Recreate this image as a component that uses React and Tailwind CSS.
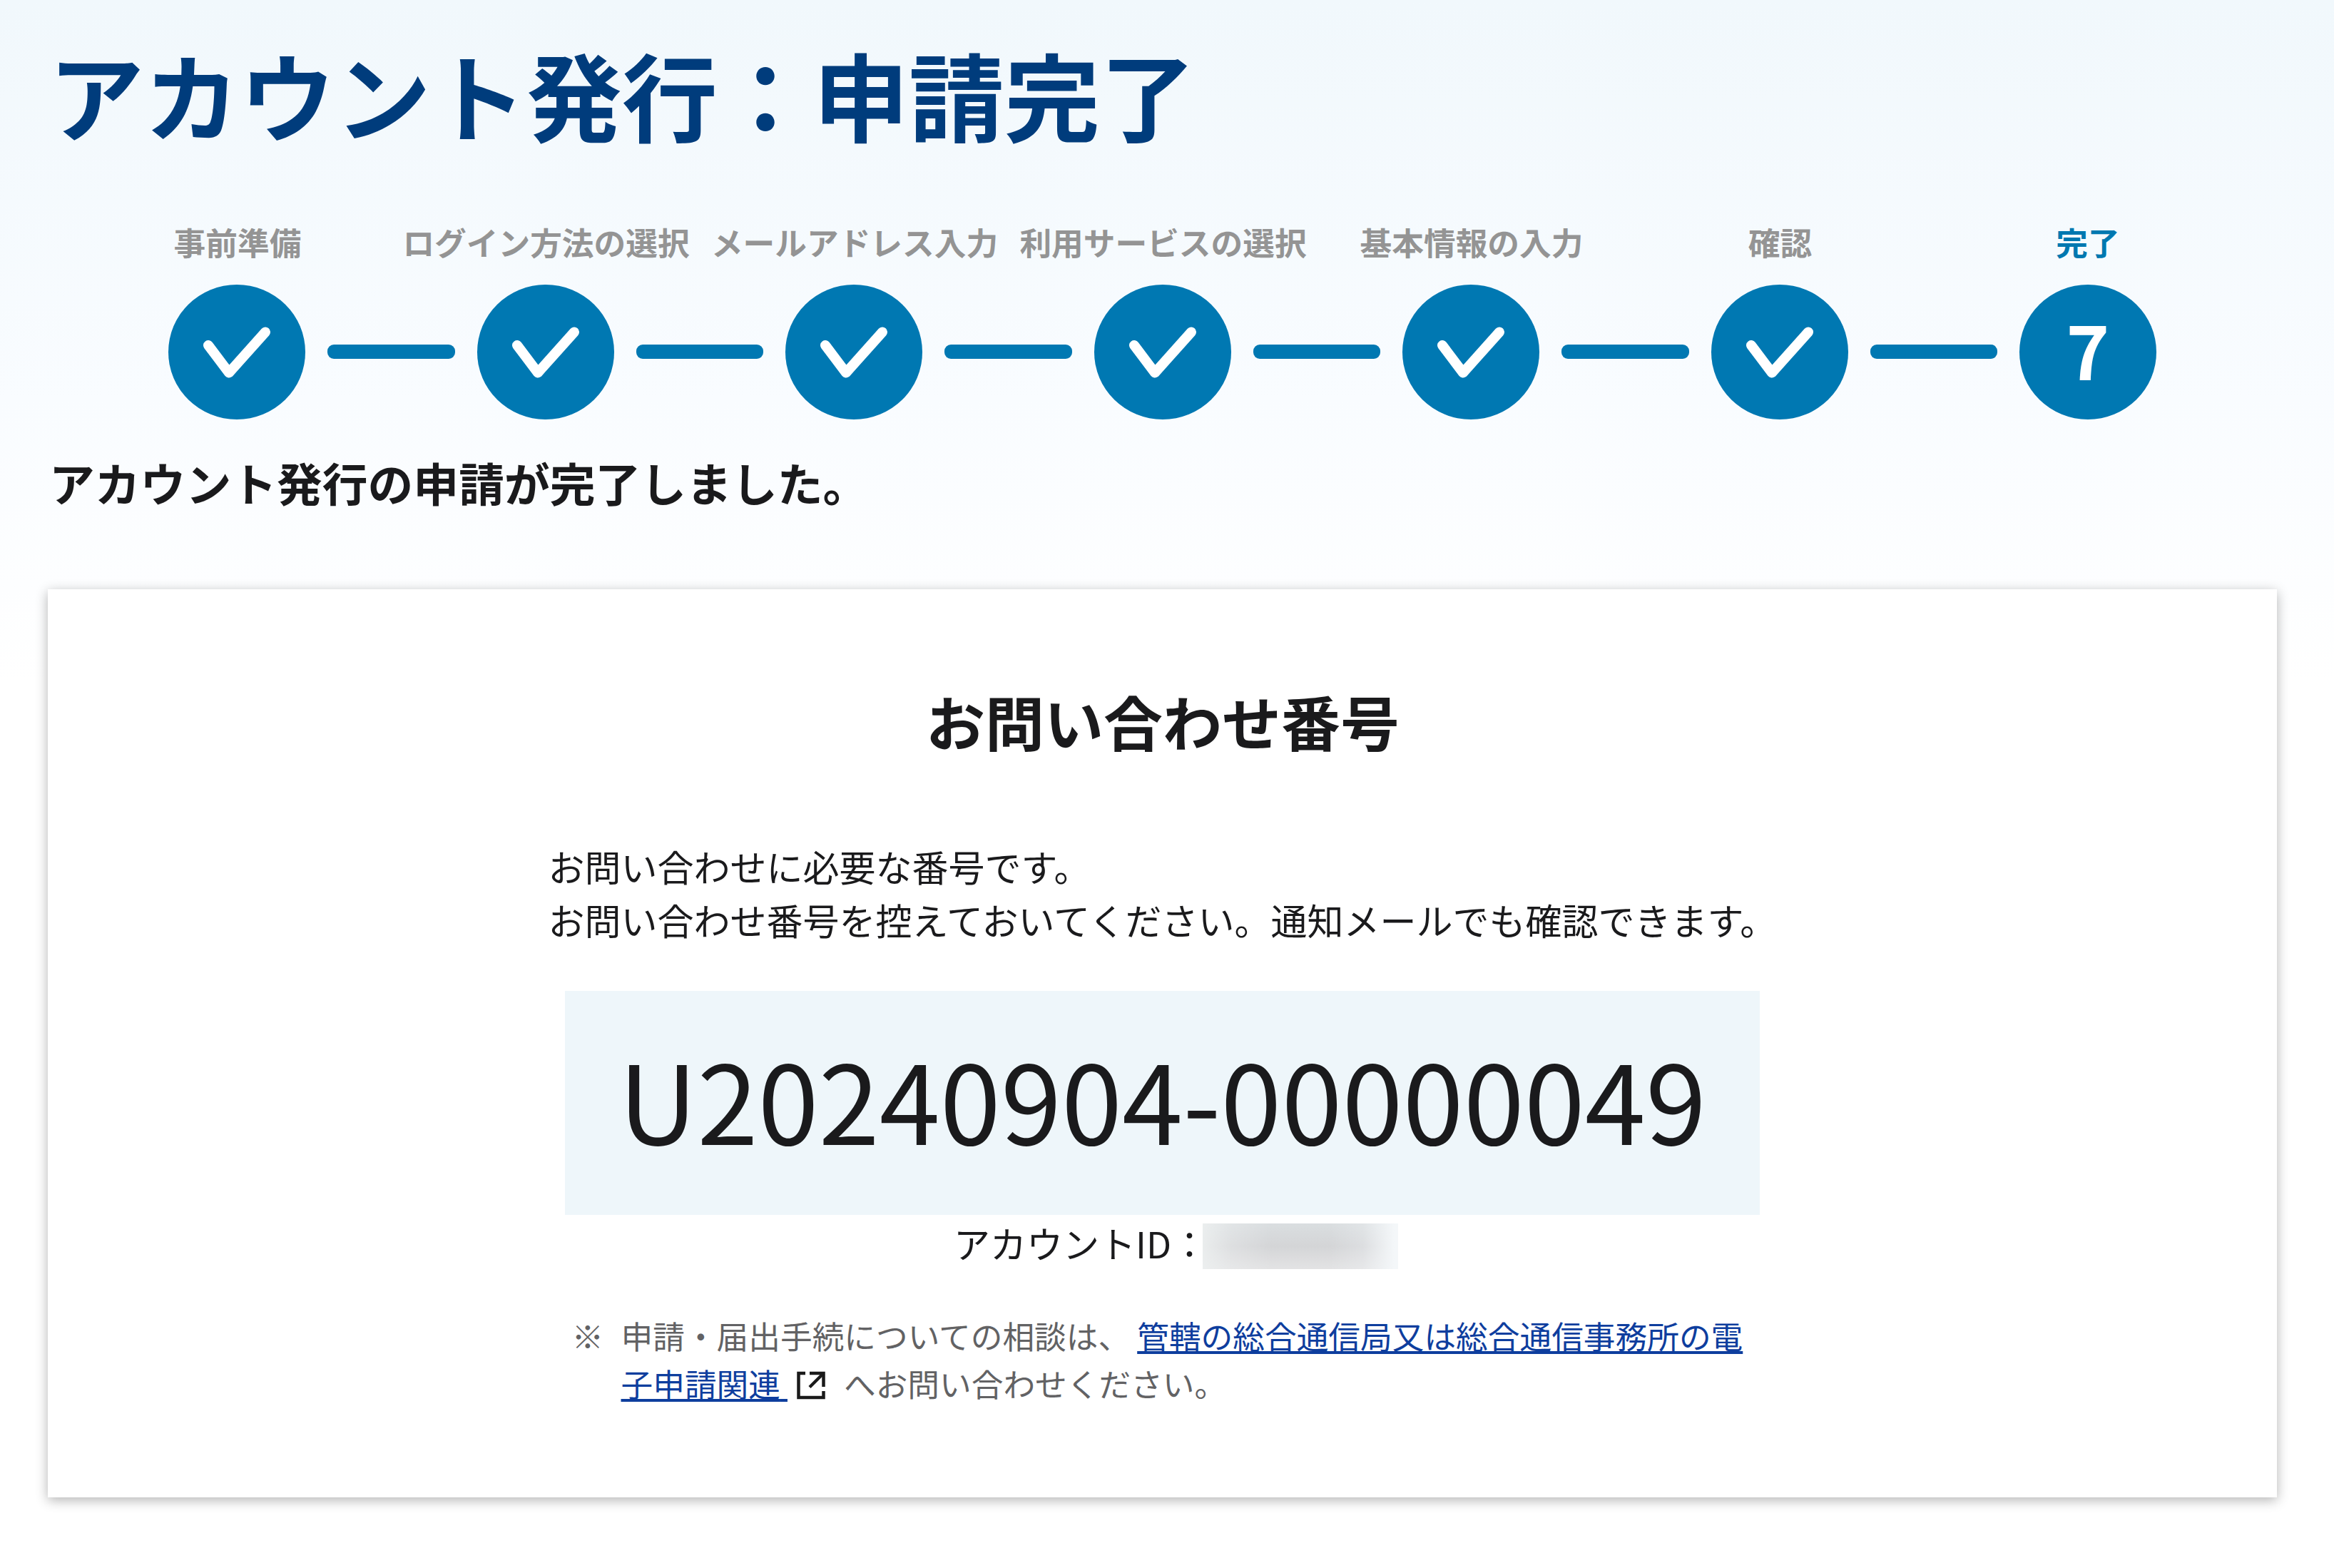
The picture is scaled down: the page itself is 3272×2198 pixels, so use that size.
const steps = [
  '事前準備',
  'ログイン方法の選択',
  'メールアドレス入力',
  '利用サービスの選択',
  '基本情報の入力',
  '確認',
  '完了',
]

function CheckMark() {
  return (
    <svg viewBox="0 0 192 189" className="w-full h-full" fill="none" stroke="#fff" strokeWidth="14" strokeLinecap="round" strokeLinejoin="round">
      <path d="M56 85 L85 123.5 L136 66.5" />
    </svg>
  )
}

function ExternalIcon() {
  return (
    <svg viewBox="0 0 40 40" className="inline-block w-10 h-10 ml-[13px] mr-[16px] align-[-4px]" fill="none" stroke="#1a1a1a" strokeWidth="4.5">
      <path d="M12 3 H2.5 V37 H37.5 V28" />
      <path d="M18 3 H37.5 V22" />
      <path d="M37 3.5 L18 22.5" />
    </svg>
  )
}

function Stepper() {
  return (
    <div className="flex items-end pl-[236px] pr-[249px]">
      {steps.map((label, i) => {
        const last = i === steps.length - 1
        return (
          <div key={label} className={last ? 'flex items-end' : 'flex items-end flex-1'}>
            <div className="w-48 shrink-0 flex flex-col items-center">
              <span className={`whitespace-nowrap text-[44.7px] leading-[60px] font-bold ${last ? 'text-[#0078b0]' : 'text-[#949494] pl-[2px]'}`}>
                {label}
              </span>
              <div className="mt-[30px] w-48 h-[189px] rounded-[50%] bg-[#0078b2] flex items-center justify-center">
                {last ? (
                  <span className="pb-[10px] text-white text-[103px] leading-[103px] font-bold">{i + 1}</span>
                ) : (
                  <CheckMark />
                )}
              </div>
            </div>
            {!last && <div className="flex-1 h-5 mx-[31px] mb-[85px] rounded-[9px] bg-[#0078b2]" />}
          </div>
        )
      })}
    </div>
  )
}

export default function App() {
  return (
    <div
      lang="ja"
      className="w-[3272px] h-[2198px] overflow-hidden bg-white bg-[linear-gradient(180deg,#f1f8fc_0px,#f9fcff_560px,#ffffff_960px)] font-['Noto_Sans_CJK_JP',sans-serif] text-[#1a1a1c]"
    >
      <h1 className="pt-[51px] pl-[68px] text-[134px] leading-[160px] font-bold text-[#003c7c]">
        アカウント発行：申請完了
      </h1>

      <div className="mt-[98px]">
        <Stepper />
      </div>

      <p className="mt-[47px] pl-[69px] text-[63.8px] leading-[80px] font-bold">
        アカウント発行の申請が完了しました。
      </p>

      <main className="mt-[111px] ml-[67px] w-[3125px] h-[1273px] bg-white shadow-[0_4px_16px_rgba(0,0,0,0.3)] flex flex-col items-center">
        <h2 className="mt-[134px] ml-px text-[83px] leading-[100px] font-bold">お問い合わせ番号</h2>

        <p className="mt-[117px] text-[51px] leading-[75px] whitespace-nowrap">
          お問い合わせに必要な番号です。
          <br />
          お問い合わせ番号を控えておいてください。通知メールでも確認できます。
        </p>

        <div className="mt-[62px] w-[1675px] h-[314px] bg-[#eef6fa] flex items-center justify-center">
          <span className="pb-[17px] text-[153.3px] leading-[160px]">U20240904-00000049</span>
        </div>

        {/* アカウントID */}
        <div className="mt-3 ml-[38px] flex items-center text-[51px] leading-[64px]">
          <span className="-mt-[10px] -mr-[7px]">アカウントID：</span>
          <span className="w-[274px] h-16 bg-[#d5d6d8] bg-[linear-gradient(90deg,rgba(238,241,241,0.85)_0%,rgba(238,240,241,0.35)_15%,rgba(238,240,241,0)_35%,rgba(240,243,246,0)_65%,rgba(240,243,246,0.3)_82%,rgba(244,247,249,1)_98%),linear-gradient(180deg,#dadee0_0%,#d4d5d7_50%,#e3e3e4_100%)]" />
        </div>

        <div className="mt-[60px] mr-[2px] flex w-[1654px] text-[44.7px] leading-[66.7px] text-[#626264] whitespace-nowrap">
          <span className="w-[69px] shrink-0">※</span>
          <p>
            申請・届出手続についての相談は、{' '}
            <a href="#" className="text-[#0e3e9e] underline">
              管轄の総合通信局又は総合通信事務所の電
              <br />
              子申請関連{' '}
            </a>
            <ExternalIcon />
            {' '}へお問い合わせください。
          </p>
        </div>
      </main>
    </div>
  )
}
